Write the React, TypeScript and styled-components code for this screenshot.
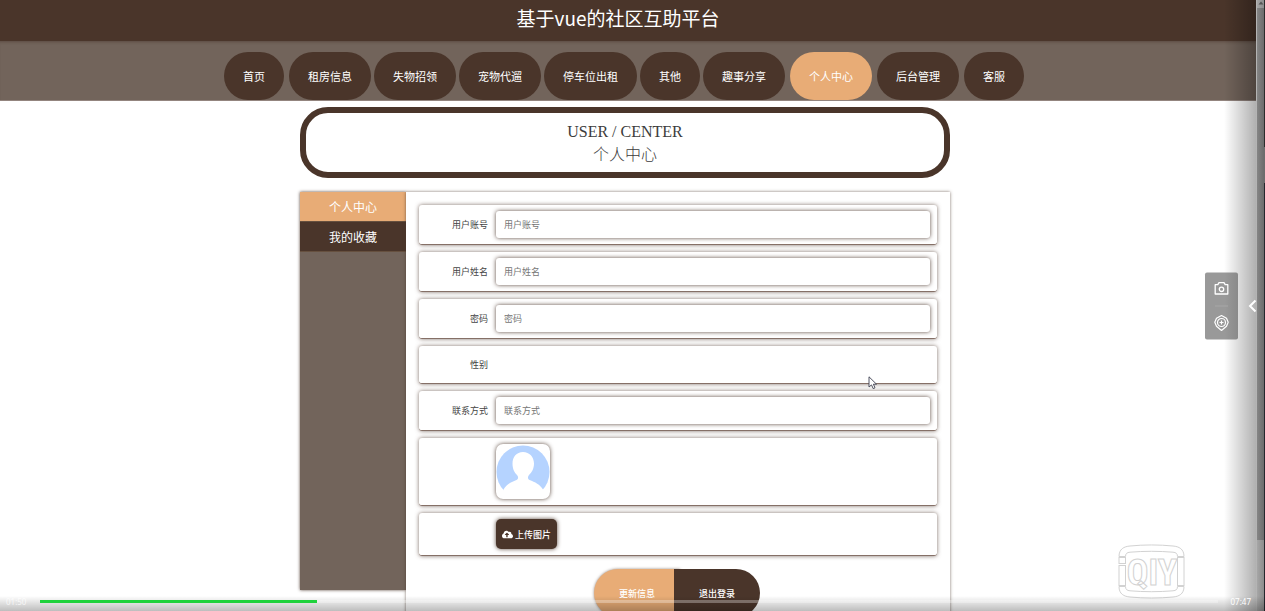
import React, { useState } from 'react';
import styled, { createGlobalStyle, css } from 'styled-components';
import { FaCloudUploadAlt } from 'react-icons/fa';

const brown = '#4a352a';
const taupe = '#72645b';
const orange = '#e8ac76';
const sans = '"Noto Sans", "Noto Sans CJK SC", sans-serif';
const cjk = '"Noto Sans CJK SC", sans-serif';

const GlobalStyle = createGlobalStyle`
  *, *::before, *::after { box-sizing: border-box; }
  body { margin: 0; background: #fff; font-family: ${cjk}; color: #444; }
  button, input { font-family: inherit; }
`;

const Player = styled.div`
  position: relative;
  display: flex;
  height: 100vh;
  overflow: hidden;
`;

const Page = styled.div`
  flex: 1;
  min-width: 0;
`;

const Header = styled.header`
  height: 41px;
  padding-right: 20px;
  background: ${brown};
  color: #fff;
  text-align: center;
`;

const Title = styled.h1`
  margin: 0;
  font-size: 19px;
  line-height: 36px;
  font-weight: 400;
`;

const Nav = styled.nav`
  display: flex;
  justify-content: center;
  gap: 5px;
  padding: 11px 8px 0 0;
  border-bottom: 1px solid #93857f;
  background: ${taupe};
  box-shadow: inset 0 3px 3px -2px rgba(50, 30, 20, 0.35);
`;

const NavGroup = styled.div`
  display: flex;
  gap: 3px;
`;

const NavLink = styled.a<{ $active?: boolean }>`
  padding: 0 19px;
  border-radius: 24px;
  background: ${(p) => (p.$active ? orange : brown)};
  color: #fff;
  font-size: 11px;
  line-height: 48px;
  text-decoration: none;
  white-space: nowrap;
`;

const Main = styled.main`
  padding: 6px 6px 0 0;
`;

const Banner = styled.section`
  width: 52%;
  margin: 0 auto 14px;
  padding: 8px 7px;
  border: 6px solid ${brown};
  border-radius: 28px;
  color: #3c3c3c;
  text-align: center;
  font-size: 16px;
  line-height: 22px;
`;

const BannerEnglish = styled.div`
  font-family: "Liberation Serif", serif;
`;

const BannerTitle = styled.h2`
  margin: 0;
  font-size: 16px;
  line-height: 21px;
  font-weight: 300;
`;

const Center = styled.div`
  display: flex;
  align-items: flex-start;
  width: 52%;
  margin: 0 auto;
`;

const Sidebar = styled.aside`
  width: 106px;
  min-height: 398px;
  flex: none;
  background: ${taupe};
  box-shadow: 0 0 3px rgba(74, 53, 42, 0.9);
`;

const SideLink = styled.a<{ $active?: boolean }>`
  display: block;
  border-bottom: 1px solid #66503f;
  background: ${(p) => (p.$active ? orange : brown)};
  color: #fff;
  font-size: 12px;
  line-height: 29px;
  text-align: center;
  text-decoration: none;
`;

const Form = styled.form`
  position: relative;
  flex: 1;
  min-width: 0;
  display: flex;
  flex-direction: column;
  gap: 7px;
  padding: 13px;
  background: #fff;
  box-shadow: 0 0 3px rgba(74, 53, 42, 0.7);
`;

const Row = styled.div`
  display: flex;
  align-items: center;
  min-height: 38px;
  padding: 6px 7px;
  border-bottom: 1px solid #857067;
  border-radius: 3px;
  box-shadow: 0 0 4px rgba(74, 53, 42, 0.7);
  font-size: 9px;
`;

const labelStyle = css`
  width: 62px;
  margin-right: 8px;
  flex: none;
  text-align: right;
`;

const Label = styled.label`
  ${labelStyle}
`;

const LabelText = styled.span`
  ${labelStyle}
`;

const Field = styled.input`
  flex: 1;
  min-width: 0;
  height: 27px;
  padding: 0 8px;
  border: 0;
  border-radius: 3px;
  background: #fff;
  box-shadow: 0 0 4px rgba(74, 53, 42, 0.9);
  color: #444;
  font-size: 9px;
  outline: none;
  &::placeholder { color: #757575; opacity: 1; }
`;

const AvatarFrame = styled.div`
  width: 54px;
  height: 55px;
  border-radius: 7px;
  overflow: hidden;
  box-shadow: 0 0 4px rgba(74, 53, 42, 0.9);
  svg { display: block; }
`;

const UploadButton = styled.button`
  display: flex;
  align-items: center;
  gap: 2px;
  height: 30px;
  padding: 0 6px;
  border: 0;
  border-radius: 5px;
  background: ${brown};
  box-shadow: 0 0 4px rgba(74, 53, 42, 0.9);
  color: #fff;
  font-size: 9px;
  font-weight: 500;
  svg { width: 11px; height: 11px; }
`;

const Actions = styled.div`
  display: flex;
  justify-content: center;
  padding: 6px 2px 0 0;
`;

const ActionButton = styled.button<{ $kind: 'save' | 'logout' }>`
  height: 48px;
  padding: 0 25px;
  border: 0;
  color: #fff;
  font-size: 9px;
  font-weight: 500;
  white-space: nowrap;
  ${(p) =>
    p.$kind === 'save'
      ? css`
          border-radius: 24px 0 0 24px;
          background: ${orange};
          box-shadow: 0 0 3px rgba(74, 53, 42, 0.6);
        `
      : css`
          margin-left: -6px;
          border-radius: 0 24px 24px 0;
          background: ${brown};
        `}
`;

const ScrollTrack = styled.div`
  width: 8px;
  flex: none;
  display: flex;
  flex-direction: column;
  border-left: 1px solid #b4b4b4;
  background: linear-gradient(90deg, #a6a6a6, #8c8c8c);
`;

const ScrollArrow = styled.div`
  display: flex;
  justify-content: center;
  height: 8px;
  svg { display: block; }
`;

const ScrollThumb = styled.div`
  height: 87%;
  background: linear-gradient(90deg, #858585, #6c6c6c);
`;

const Edge = styled.div`
  width: 1px;
  flex: none;
  background: linear-gradient(#2c2c2c 24%, #6c6c6c 24%, #6c6c6c 30%, #25272d 30%);
`;

const SideShade = styled.div`
  position: absolute;
  top: 0;
  right: 9px;
  bottom: 0;
  width: 32px;
  background: linear-gradient(90deg, rgba(0, 0, 0, 0), rgba(0, 0, 0, 0.31));
  pointer-events: none;
`;

const Tools = styled.div`
  position: absolute;
  top: 50%;
  right: 27px;
  display: flex;
  flex-direction: column;
  align-items: center;
  width: 33px;
  border-radius: 2px;
  background: linear-gradient(90deg, #999 60%, #8a8a8a);
  transform: translateY(-50%);
`;

const ToolButton = styled.button`
  display: flex;
  align-items: center;
  justify-content: center;
  width: 33px;
  height: 33px;
  padding: 0;
  border: 0;
  background: none;
`;

const ToolDivider = styled.div`
  width: 13px;
  height: 1px;
  background: #a8a8a8;
`;

const Expand = styled.button`
  position: absolute;
  top: 50%;
  right: 8px;
  padding: 0;
  border: 0;
  background: none;
  transform: translateY(-50%);
  svg { display: block; }
`;

const Watermark = styled.div`
  position: absolute;
  right: 80px;
  bottom: 12px;
  svg { display: block; }
`;

const Pointer = styled.div`
  position: absolute;
  left: 868px;
  top: 376px;
  pointer-events: none;
  svg { display: block; }
`;

const Controls = styled.div`
  position: absolute;
  left: 0;
  right: 0;
  bottom: 0;
  display: flex;
  align-items: flex-start;
  height: 15px;
  padding: 0 14px 0 6px;
  background: linear-gradient(rgba(0, 0, 0, 0), rgba(0, 0, 0, 0.26));
`;

const Time = styled.span<{ $dim?: boolean }>`
  width: ${(p) => (p.$dim ? '34px' : 'auto')};
  color: ${(p) => (p.$dim ? 'rgba(255,255,255,0.75)' : '#fff')};
  font-family: ${sans};
  font-size: 8px;
  line-height: 11px;
`;

const Seek = styled.input`
  flex: 1;
  min-width: 0;
  height: 3px;
  margin: 4px 13px 0 0;
  appearance: none;
  outline: none;
  &::-webkit-slider-thumb {
    appearance: none;
    width: 0;
    height: 0;
  }
`;

const menu = ['租房信息', '失物招领', '宠物代遛', '停车位出租', '其他', '趣事分享'];

const fields = [
  { id: 'account', label: '用户账号', type: 'text' },
  { id: 'name', label: '用户姓名', type: 'text' },
  { id: 'password', label: '密码', type: 'password' },
];

const FieldRow = ({ id, label, type }: { id: string; label: string; type: string }) => (
  <Row>
    <Label htmlFor={id}>{label}</Label>
    <Field id={id} type={type} placeholder={label} />
  </Row>
);

const Avatar = () => (
  <svg width="54" height="55" viewBox="0 0 54 55" aria-hidden="true">
    <circle cx="27" cy="28" r="26.5" fill="#b5d3ff" />
    <path
      d="M27 8C20.500 8 16.500 13 16.500 19.500C16.500 25 18.500 28.500 21 31C22.500 32.500 22.600 35 20.500 36C15 38 10.500 40.500 7.500 45.500L7.500 55H47L47 45.500C44 40.500 39 38 33.500 36C31.500 35 31.600 32.500 33 31C35.500 28.500 38 25 38 19.500C38 13 33.500 8 27 8Z"
      fill="#fff"
    />
  </svg>
);

const DURATION = 467;

export default function App() {
  const [position, setPosition] = useState(110);
  const played = (position / DURATION) * 100;

  return (
    <>
      <GlobalStyle />
      <Player>
        <Page>
          <Header>
            <Title>基于vue的社区互助平台</Title>
          </Header>
          <Nav>
            <NavLink href="#home">首页</NavLink>
            <NavGroup>
              {menu.map((item) => (
                <NavLink key={item} href={`#${item}`}>{item}</NavLink>
              ))}
            </NavGroup>
            <NavLink href="#center" $active>个人中心</NavLink>
            <NavLink href="#admin">后台管理</NavLink>
            <NavLink href="#service">客服</NavLink>
          </Nav>
          <Main>
            <Banner>
              <BannerEnglish>USER / CENTER</BannerEnglish>
              <BannerTitle>个人中心</BannerTitle>
            </Banner>
            <Center>
              <Sidebar>
                <SideLink href="#center" $active>个人中心</SideLink>
                <SideLink href="#favorites">我的收藏</SideLink>
              </Sidebar>
              <Form onSubmit={(e) => e.preventDefault()}>
                {fields.map((f) => (
                  <FieldRow key={f.id} {...f} />
                ))}
                <Row>
                  <LabelText>性别</LabelText>
                </Row>
                <FieldRow id="phone" label="联系方式" type="text" />
                <Row>
                  <LabelText />
                  <AvatarFrame>
                    <Avatar />
                  </AvatarFrame>
                </Row>
                <Row>
                  <LabelText />
                  <UploadButton type="button">
                    <FaCloudUploadAlt />
                    上传图片
                  </UploadButton>
                </Row>
                <Actions>
                  <ActionButton type="submit" $kind="save">更新信息</ActionButton>
                  <ActionButton type="button" $kind="logout">退出登录</ActionButton>
                </Actions>
              </Form>
            </Center>
          </Main>
        </Page>
        <ScrollTrack>
          <ScrollArrow>
            <svg width="6" height="8" viewBox="0 0 6 8">
              <path d="M3 1.500L5.500 4.500H0.500Z" fill="#555" />
            </svg>
          </ScrollArrow>
          <ScrollThumb />
        </ScrollTrack>
        <Edge />

        <SideShade />
        <Watermark>
          <svg width="67" height="55" viewBox="0 0 67 55" fill="none" stroke="#d2d2d2" strokeWidth="1">
            <path d="M1 12.500C1 5 6 2.500 12 2C26 0.600 41 0.600 55 2C61 2.500 66 5 66 12.500H59.500C59.500 9.500 58 8.500 55 8.200C41 7 26 7 12 8.200C9 8.500 7.500 9.500 7.500 12.500Z" />
            <path d="M1 42.500C1 50 6 52.500 12 53C26 54.400 41 54.400 55 53C61 52.500 66 50 66 42.500H59.500C59.500 45.500 58 46.500 55 46.800C41 48 26 48 12 46.800C9 46.500 7.500 45.500 7.500 42.500Z" />
            <rect x="1" y="13.500" width="6.500" height="6" />
            <rect x="1" y="21.500" width="6.500" height="20" />
            <rect x="59.500" y="13.500" width="6.500" height="28" />
            <text x="34" y="41" textAnchor="middle" fontFamily='"Roboto Condensed", "Liberation Sans Narrow", Roboto, sans-serif' fontWeight="700" fontSize="36">QIY</text>
          </svg>
        </Watermark>
        <Tools>
          <ToolButton type="button" aria-label="截图">
            <svg width="15" height="14" viewBox="0 0 15 14" fill="none" stroke="#fff" strokeWidth="1.300">
              <path d="M1.200 3.200H3.800L5 1.200H10L11.200 3.200H13.800V12.500H1.200Z" strokeLinejoin="round" />
              <circle cx="7.500" cy="7.800" r="2.200" />
            </svg>
          </ToolButton>
          <ToolDivider />
          <ToolButton type="button" aria-label="录制">
            <svg width="15" height="17" viewBox="0 0 15 17" fill="none" stroke="#fff" strokeWidth="1.200" strokeLinejoin="round">
              <path d="M7.500 1L12.500 3.800L14.200 7.800L12.500 11.800L7.500 16L2.500 11.800L0.800 7.800L2.500 3.800Z" />
              <circle cx="7.500" cy="8" r="4" />
              <path d="M7.500 6V10M5.500 8H9.500" />
            </svg>
          </ToolButton>
        </Tools>
        <Expand type="button" aria-label="展开">
          <svg width="9" height="13" viewBox="0 0 9 13" fill="none" stroke="#fff" strokeWidth="2">
            <path d="M7.500 1L2 6.500L7.500 12" />
          </svg>
        </Expand>
        <Controls>
          <Time $dim>01:50</Time>
          <Seek
            type="range"
            aria-label="播放进度"
            min={0}
            max={DURATION}
            value={position}
            onChange={(e) => setPosition(Number(e.target.value))}
            style={{
              background: `linear-gradient(90deg, #1fd23c ${played}%, rgba(255,255,255,0.3) ${played}%)`,
            }}
          />
          <Time>07:47</Time>
        </Controls>
        <Pointer>
          <svg width="10" height="14" viewBox="0 0 10 14">
            <path d="M1 0.800V11L3.500 8.900L5.200 12.600L7 11.800L5.400 8.200H8.500Z" fill="#fff" stroke="#3d4050" strokeWidth="0.900" />
          </svg>
        </Pointer>
      </Player>
    </>
  );
}
